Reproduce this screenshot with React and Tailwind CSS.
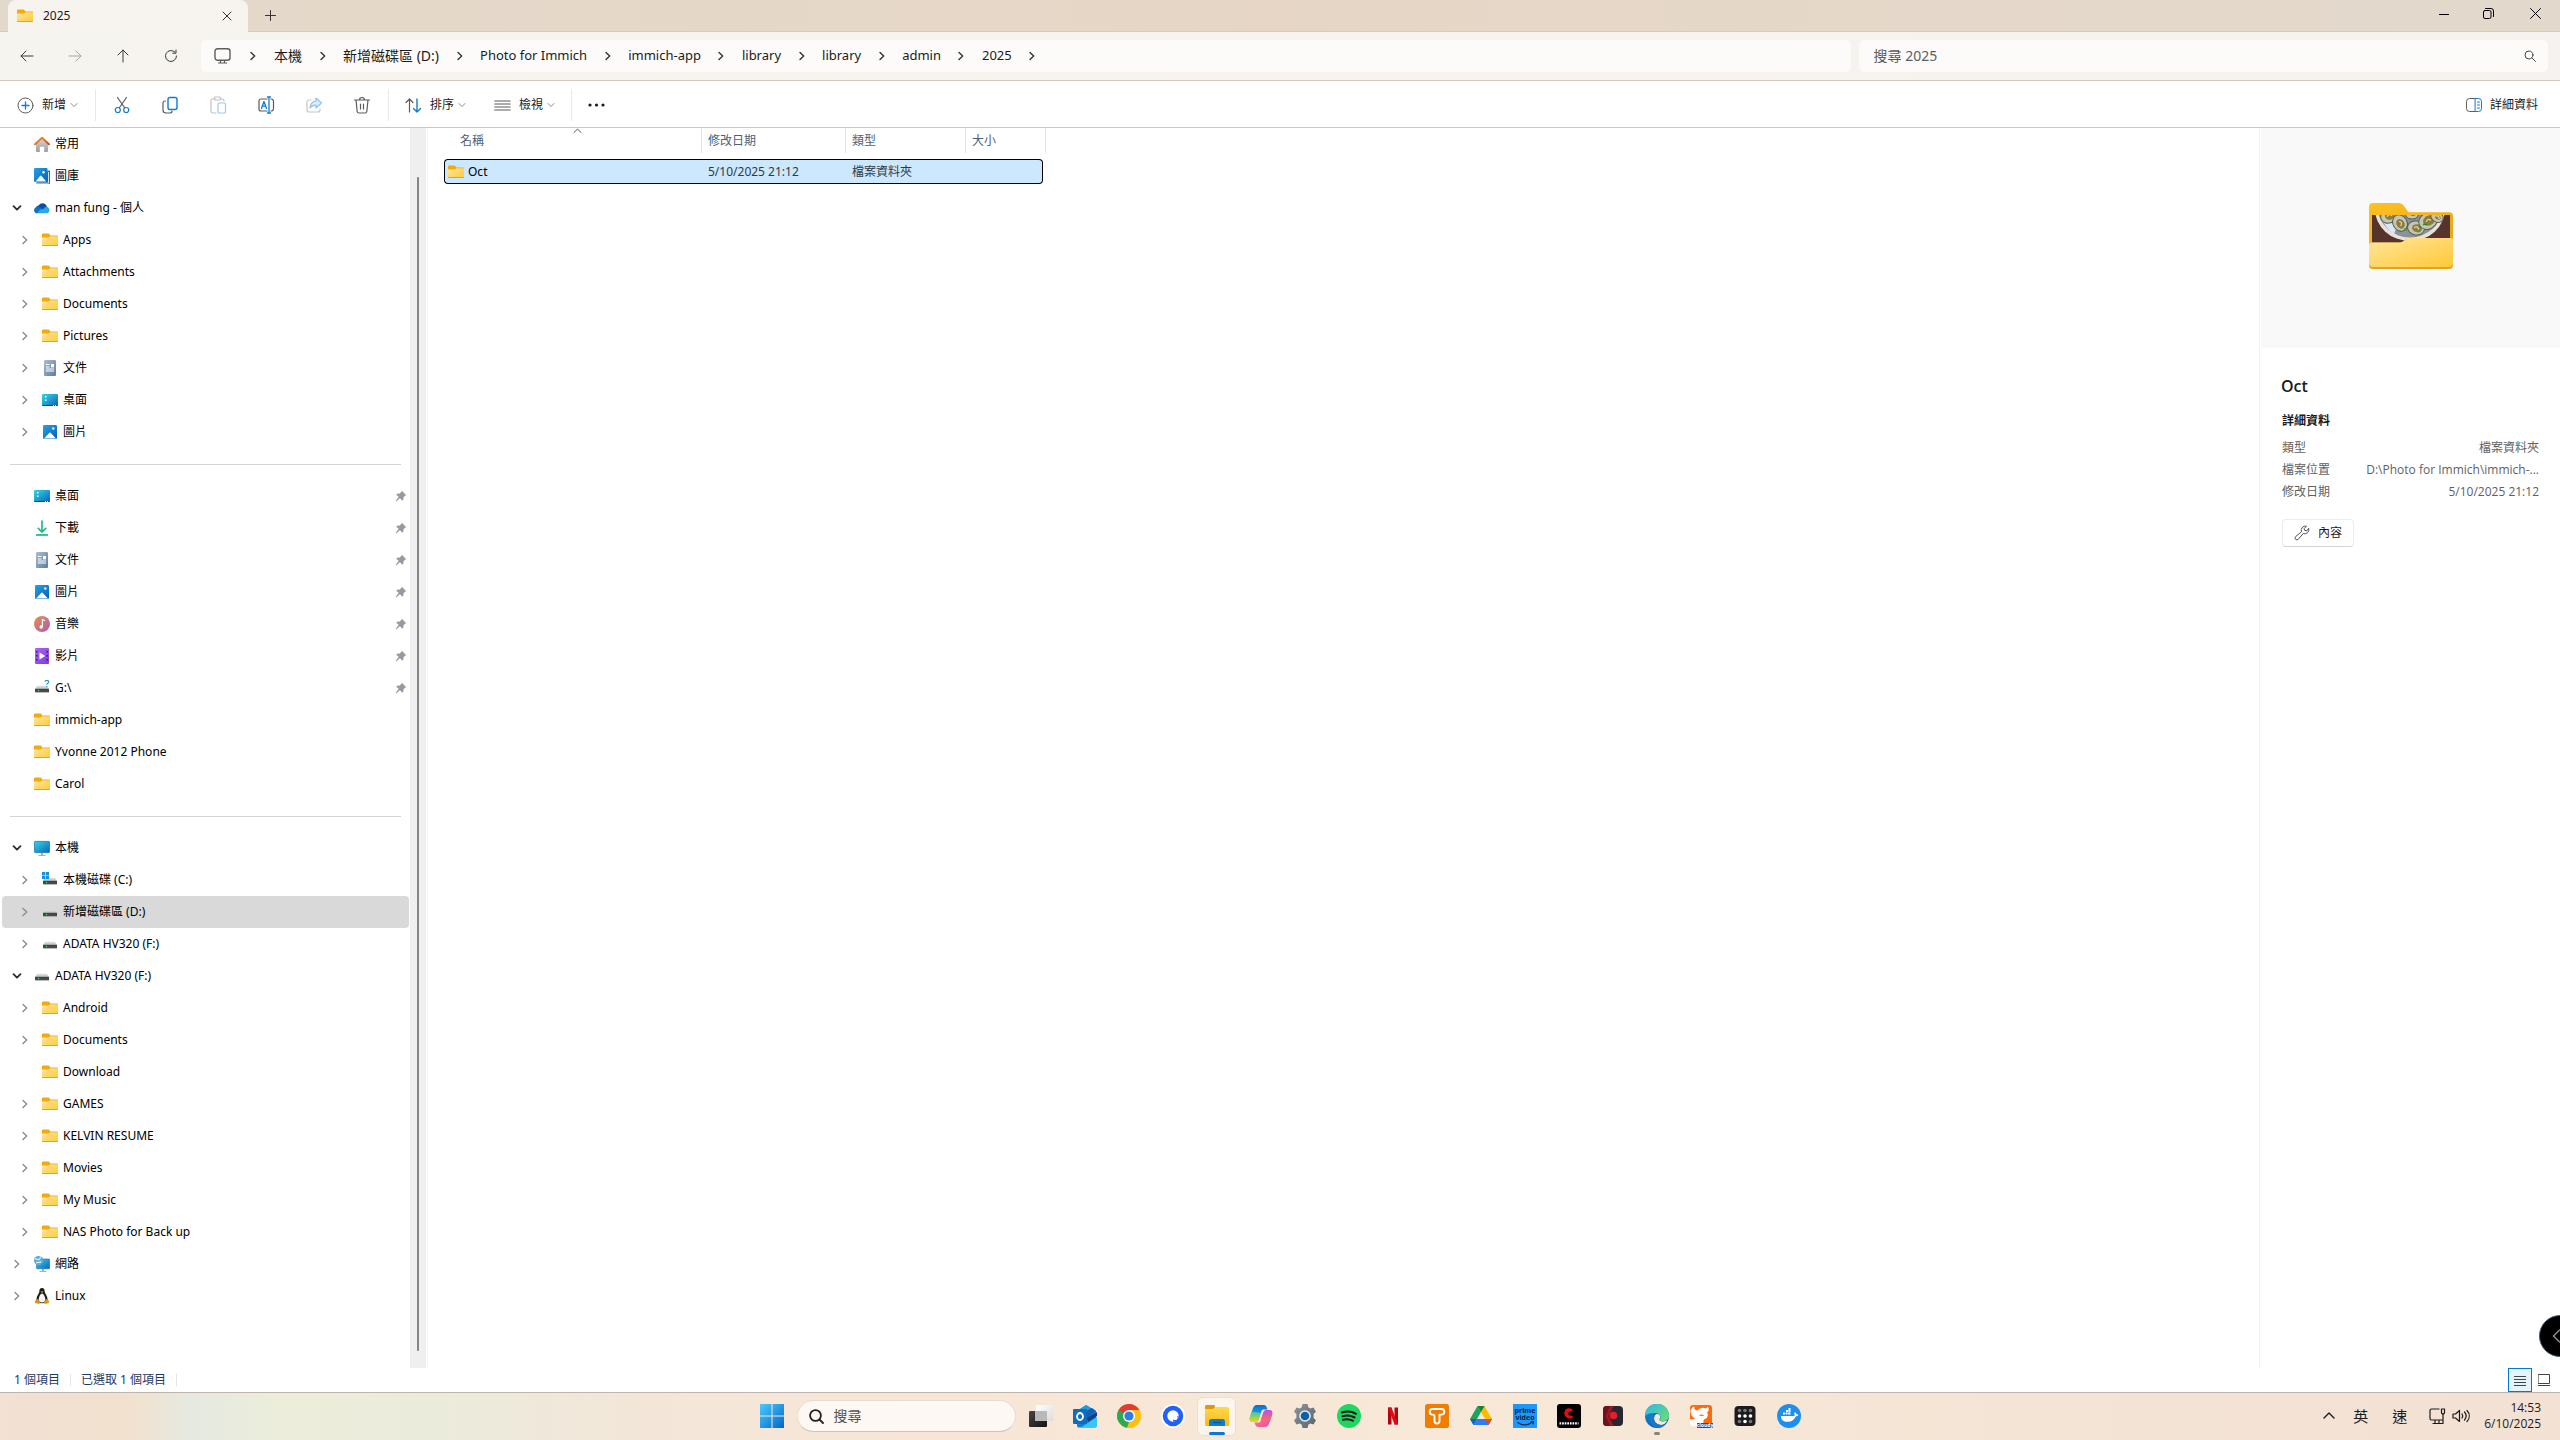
import React from "react";

/* ---------- shared gradients ---------- */

function Gradients() {
  const lin = (id, a, b, diag = true) => (
    <linearGradient id={id} x1="0" y1="0" x2={diag ? "1" : "0"} y2="1">
      <stop offset="0" stopColor={a} />
      <stop offset="1" stopColor={b} />
    </linearGradient>
  );
  return (
    <svg className="absolute size-0" aria-hidden="true">
      <defs>
        {lin("folder", "#ffe69c", "#ffc937")}
        {lin("folderBack", "#ffc21f", "#e5a11b")}
        {lin("blue", "#1fa3e8", "#0a5fb4")}
        {lin("teal", "#35d6e0", "#0b63c0")}
        {lin("doc", "#a9bed4", "#5f7d9f")}
        {lin("music", "#f08a4b", "#a860b0")}
        {lin("video", "#b065f0", "#7d3bd6")}
        {lin("green", "#3cc98a", "#0fa38f", false)}
        {lin("roof", "#f79a2e", "#d1450f")}
        {lin("wall", "#d8d8d8", "#9d9d9d", false)}
        {lin("win", "#4ccaff", "#0067c6")}
        {lin("dark", "#484644", "#141414")}
        {lin("pale", "#ffffff", "#dcdcdc")}
        {lin("disk", "#dfe2e4", "#b9bdc1", false)}
        {lin("edgeA", "#2fb7ea", "#6fe06a")}
        {lin("edgeB", "#1b8fdd", "#0a4a9a")}
        {lin("copA", "#0a6fd6", "#2bc4e8", false)}
        {lin("copB", "#35c7b0", "#f5d60a", false)}
        {lin("copC", "#b553e6", "#ff6d5a", false)}
        {lin("copD", "#ff8a5c", "#e84bb0")}
        {lin("gear", "#8b959d", "#59636b")}
        {lin("taskFolder", "#ffd84d", "#fbb717", false)}
      </defs>
    </svg>
  );
}

/* ---------- small icons ---------- */

const Svg = ({ s = 16, children, className = "" }) => (
  <svg width={s} height={s} viewBox="0 0 16 16" fill="none" className={"shrink-0 " + className} aria-hidden="true">
    {children}
  </svg>
);
const Line = ({ s = 16, color = "currentColor", w = 1, vb = 16, children, className = "" }) => (
  <svg width={s} height={s} viewBox={`0 0 ${vb} ${vb}`} fill="none" stroke={color} strokeWidth={w} strokeLinecap="round" strokeLinejoin="round" className={"shrink-0 " + className} aria-hidden="true">
    {children}
  </svg>
);

const FolderIcon = () => (
  <Svg>
    <path d="M0 2.4c0-.6.4-.9.9-.9h5.2c.5 0 .8.1 1.1.4L8.6 3.400H15c.6 0 1 .4 1 1V6H0z" fill="#f2ab0c" />
    <path d="M0 5.600h6.500c.5 0 .8-.2 1.100-.5l1-.9H15.200c.5 0 .8.300.8.800v8.200c0 .5-.3.900-.9.900H.900c-.6 0-.9-.4-.9-.9z" fill="url(#folder)" />
    <path d="M.2 13.500h15.600" stroke="#e8a31a" strokeWidth="1" />
  </Svg>
);
const HomeIcon = () => (
  <Svg>
    <path d="M2 7.500 8 2l6 5.500V15a1 1 0 0 1-1 1h-2.800v-4.500a.7.7 0 0 0-.7-.7h-3a.7.7 0 0 0-.7.700V16H3a1 1 0 0 1-1-1z" fill="url(#wall)" />
    <path d="M1 8.200 8 1.800l7 6.400" stroke="url(#roof)" strokeWidth="2" strokeLinecap="round" strokeLinejoin="round" />
  </Svg>
);
const PictureIcon = () => (
  <Svg>
    <rect x="1" y="1" width="14" height="14" rx="1.200" fill="url(#blue)" />
    <path d="M2 14.500 7.200 9a1.100 1.100 0 0 1 1.600 0L14 14.500z" fill="#fff" />
    <circle cx="11.300" cy="4.500" r="1.300" fill="#d9f0ff" />
  </Svg>
);
const GalleryIcon = () => (
  <Svg>
    <path d="M14 2.500h1.200c.4 0 .8.300.8.800V15c0 .6-.4 1-1 1H3.500c-.6 0-1-.4-1-1v-.500z" fill="#1a6fb5" />
    <path d="M3 15.200h11.500V4" stroke="#fff" strokeWidth=".8" />
    <rect x="0" y="0" width="13.500" height="14" rx="1.200" fill="url(#blue)" />
    <path d="M1.500 13.500 6 8a1 1 0 0 1 1.500 0l4.800 5.500z" fill="#e8f5ff" />
    <circle cx="9.500" cy="4.300" r="1.200" fill="#fff" />
  </Svg>
);
const CloudIcon = () => (
  <Svg>
    <path d="M2 11C.8 7 3.500 5.500 4.800 5.400 6.300 2.400 11.300 2 13 6.600L9 11z" fill="#0a4fa3" />
    <path d="M3.200 13.300A3.200 3.200 0 0 1 2.500 7c1.500-.5 2.900-.1 4 .7L12 11z" fill="#1070c8" />
    <path d="M3.500 13.300c1-3 3.500-4.500 6-4.300 1-2 3.300-2.800 4.800-1.500A3.300 3.300 0 0 1 12.800 13.300z" fill="#28a8ea" />
  </Svg>
);
const DocIcon = () => (
  <Svg>
    <rect x="2" y="0" width="12" height="16" rx="1" fill="url(#doc)" />
    <path d="M4 4.500h3.500M4 7h3.500M4 9h8M4 11h8" stroke="#fff" strokeWidth="1" />
    <rect x="9" y="4" width="3" height="3.400" fill="#fff" />
  </Svg>
);
const DesktopIcon = () => (
  <Svg>
    <rect x="0" y="2" width="16" height="12" rx="1" fill="url(#teal)" />
    <path d="M.5 13.500h15" stroke="#084a86" strokeWidth="1" />
    <path d="M3 4h1.500v1.500H3zM3 7.500h1.500V9H3z" fill="#fff" />
    <path d="M11 13.500h1M13 13.500h1" stroke="#c7f0ff" strokeWidth="1" />
  </Svg>
);
const DownloadIcon = () => (
  <Svg>
    <path d="M8 .5v11M3.800 7.800 8 12l4.200-4.200" stroke="#25b98d" strokeWidth="1.700" />
    <rect x="2" y="14" width="12" height="1.800" rx=".4" fill="url(#green)" />
  </Svg>
);
const MusicIcon = () => (
  <Svg>
    <circle cx="8" cy="8" r="8" fill="url(#music)" />
    <circle cx="7.200" cy="11" r="1.700" fill="#fff" />
    <path d="M8.400 11V3.500l2.600 1.300" stroke="#fff" strokeWidth="1.200" />
  </Svg>
);
const VideoIcon = () => (
  <Svg>
    <rect x="1" y="0" width="14" height="16" rx="1" fill="url(#video)" />
    <path d="M2.800 3v11M13.200 3v11" stroke="#3e1580" strokeWidth="1.500" strokeDasharray="1.500 2.500" />
    <path d="M5.500 4.500v7l5.800-3.500z" fill="#fff" />
  </Svg>
);
const DiskBody = () => (
  <>
    <path d="M3.200 5.800h9.600L15 9H1z" fill="url(#disk)" />
    <rect x="1" y="8.800" width="14" height="3.400" fill="#454545" />
    <path d="M1 12.300h14" stroke="#9a9a9a" strokeWidth=".6" />
    <circle cx="4.500" cy="10.500" r=".7" fill="#3fe06b" />
  </>
);
const DiskIcon = () => <Svg><DiskBody /></Svg>;
const SystemDiskIcon = () => (
  <Svg>
    <DiskBody />
    <path d="M0 0h3.200v3.200H0zM3.800 0H7v3.200H3.800zM0 3.800h3.200V7H0zM3.800 3.800H7V7H3.800z" fill="#1690e0" />
  </Svg>
);
const UnknownDiskIcon = () => (
  <Svg>
    <DiskBody />
    <path d="M11 1.800c0-2 3.600-2 3.600.1 0 1.500-1.800 1.300-1.800 2.900M12.800 6v1" stroke="#2c94d8" strokeWidth="1.200" />
  </Svg>
);
const ComputerIcon = () => (
  <Svg>
    <path d="M7 13h2v2h2.500v1h-7v-1H7z" fill="#9db3c2" />
    <rect x=".4" y="1.400" width="15.200" height="11.200" rx=".8" fill="url(#teal)" stroke="#1173b8" strokeWidth=".8" />
  </Svg>
);
const NetworkIcon = () => (
  <Svg>
    <path d="M8 13h2v2h2.500v1H5.500v-1H8z" fill="#9db3c2" />
    <rect x="2.500" y="3" width="13.200" height="9.800" rx=".8" fill="url(#teal)" stroke="#1173b8" strokeWidth=".6" />
    <circle cx="4.600" cy="4.600" r="4.600" fill="#5da9d6" />
    <path d="M1 3c2-.5 2.500 1 4 .5S5.500 1 7 1M2 7c2-1.500 3.500.5 5-1.500" stroke="#d6eefa" strokeWidth="1.300" />
  </Svg>
);
const LinuxIcon = () => (
  <Svg>
    <path d="M8 0c2 0 2.700 1.500 2.600 3.500 0 1.800 3 4.500 3 8 0 2.500-2 3.700-5.600 3.700S2.400 14 2.400 11.500c0-3.500 3-6.200 3-8C5.300 1.500 6 0 8 0z" fill="#1d1d1b" />
    <path d="M8 5.500c1.500 0 3.300 3.500 3.300 6 0 2-1.300 3-3.300 3s-3.300-1-3.300-3c0-2.500 1.800-6 3.300-6z" fill="#f4f4f0" />
    <path d="M6.500 3.800 8 3.200l1.500.6L8 5z" fill="#e5a50a" />
    <path d="M1.200 12.500 3.800 11l2.500 3.800L5 16l-4-1zM14.800 12.500 12.200 11l-2.500 3.800L11 16l4-1z" fill="#d79a12" />
  </Svg>
);
const PinIcon = () => (
  <svg width="12" height="12" viewBox="0 0 12 12" className="shrink-0" aria-label="已釘選">
    <path d="M6.800.8 11.200 5.200 10 5.800 8.600 7.300 8.300 10 7.200 10.600 4.900 8.300 1.500 11.200.8 10.500 3.700 7.100 1.400 4.800 2 3.700 4.700 3.400 6.200 2z" fill="#939ca4" />
  </svg>
);
const Chevron = ({ open, size = 10, color }) => (
  <Line s={size} vb={10} w={open ? 1.800 : 1.400} color={color || (open ? "#2b2b2b" : "#8b8b8b")}>
    {open ? <path d="M1.500 3.200 5 6.700l3.500-3.500" /> : <path d="M3 1.500 6.700 5 3 8.500" />}
  </Line>
);
const SmallDown = () => (
  <Line s={8} vb={8} color="#8a8a8a"><path d="M1 2.500 4 5.500l3-3" /></Line>
);

/* ---------- title and address bars ---------- */

function TitleBar() {
  return (
    <header className="flex h-8 shrink-0 items-stretch border-b border-[#d9c9bb] bg-linear-to-r from-[#e3d9cb] via-[#e7d6c6] to-[#e2d9cc] pl-2">
      <div className="-mb-px flex w-60 items-center rounded-t-lg bg-[#f7f4ef] pl-[9px] pr-4">
        <FolderIcon />
        <span className="ml-2.5 grow text-xs">2025</span>
        <button aria-label="關閉索引標籤">
          <Line s={10} vb={10} color="#333"><path d="M1 1l8 8M9 1 1 9" /></Line>
        </button>
      </div>
      <button aria-label="新索引標籤" className="flex w-11 items-center justify-center">
        <Line s={11} vb={11} color="#333"><path d="M5.500.5v10M.5 5.500h10" /></Line>
      </button>
      <div className="ml-auto flex pb-1">
        <button aria-label="最小化" className="flex w-11 items-center justify-center">
          <Line s={10} vb={10} color="#000"><path d="M0 5.500h10" /></Line>
        </button>
        <button aria-label="還原" className="flex w-11 items-center justify-center">
          <Line s={11} vb={11} color="#000"><rect x=".5" y="2.500" width="7.500" height="8" rx="1.500" /><path d="M2.500.5h5.500a2.500 2.500 0 0 1 2.500 2.500v5.500" /></Line>
        </button>
        <button aria-label="關閉" className="flex w-[50px] items-center justify-center">
          <Line s={11} vb={11} color="#000"><path d="M.5.5l10 10M10.500.5l-10 10" /></Line>
        </button>
      </div>
    </header>
  );
}

const crumbs = ["本機", "新增磁碟區 (D:)", "Photo for Immich", "immich-app", "library", "library", "admin", "2025"];

function NavButton({ label, faded, children }) {
  return (
    <button aria-label={label} className="flex h-8 w-12 items-center justify-center">
      <Line color={faded ? "#a9a6a2" : "#3a3a3a"}>{children}</Line>
    </button>
  );
}

function AddressBar() {
  return (
    <div className="flex h-[49px] shrink-0 items-center border-b border-[#d6c6b9] bg-linear-to-r from-[#f6f4ef] via-[#f8f3ee] to-[#f5f2ef] pl-[3px] pr-3">
      <NavButton label="上一頁"><path d="M14 8H2M7 3 2 8l5 5" /></NavButton>
      <NavButton label="下一頁" faded><path d="M2 8h12M9 3l5 5-5 5" /></NavButton>
      <NavButton label="往上"><path d="M8 14V2M3 7l5-5 5 5" /></NavButton>
      <NavButton label="重新整理"><path d="M13.500 8A5.500 5.500 0 1 1 11.800 4M13 2v3.200H9.800" /></NavButton>
      <nav aria-label="路徑" className="ml-1.5 flex h-8 grow-[42] basis-0 items-center rounded-md bg-[#fcfbf9] pl-[13px]">
        <svg width="17" height="16" viewBox="0 0 17 16" fill="none" stroke="#5d5d5d" className="shrink-0" aria-hidden="true">
          <rect x="1" y=".7" width="15" height="11.600" rx="2.500" strokeWidth="1.400" />
          <path d="M6.500 12.500v2.500M10.500 12.500v2.500M4 15h9" strokeWidth="1.200" />
        </svg>
        <ol className="flex items-center">
          <li className="flex w-[43px] justify-center"><Chevron color="#333" /></li>
          {crumbs.map((c, i) => (
            <li key={i} className="flex items-center">
              <button className={i < 2 ? "text-sm" : "text-[13px]"}>{c}</button>
              <span className="flex w-[41px] justify-center"><Chevron color="#333" /></span>
            </li>
          ))}
        </ol>
      </nav>
      <label className="ml-2 flex h-8 grow-[17] basis-0 items-center rounded-md bg-[#fcfbf9] pl-[15px] pr-3">
        <input type="search" placeholder="搜尋 2025" aria-label="搜尋 2025" className="min-w-0 grow bg-transparent text-sm outline-none placeholder:text-[#5f5d5b]" />
        <Line s={12} vb={12} color="#444"><circle cx="5" cy="5" r="4" /><path d="M8 8l3.500 3.500" /></Line>
      </label>
    </div>
  );
}

/* ---------- command bar ---------- */

const Divider = () => <span className="h-8 w-px bg-[#e9e9e9]" />;
const gray = "#5b5b5b";
const blue = "#0f7bd4";

function IconButton({ label, children }) {
  return (
    <button aria-label={label} className="flex h-10 w-12 items-center justify-center">
      <Line s={18} vb={18} w={1.200} color={gray}>{children}</Line>
    </button>
  );
}

function CommandBar() {
  return (
    <div role="toolbar" className="flex h-[47px] shrink-0 items-center border-b border-[#cfc5bb] bg-white pt-0.5 text-xs text-[#1b1b1b]">
      <button className="flex h-10 w-[95px] items-center pl-[17px]">
        <Line s={17} vb={17} color={gray}><circle cx="8.500" cy="8.500" r="7.500" /><path d="M8.500 5v7M5 8.500h7" stroke={blue} strokeWidth="1.300" /></Line>
        <span className="ml-2 mr-1">新增</span>
        <SmallDown />
      </button>
      <Divider />
      <div className="flex w-[292px] items-center pl-0.5">
        <IconButton label="剪下">
          <path d="M4.500 1.500l7 10M13.500 1.500l-7 10" />
          <circle cx="4.800" cy="14" r="2.500" stroke={blue} /><circle cx="13.200" cy="14" r="2.500" stroke={blue} />
        </IconButton>
        <IconButton label="複製">
          <path d="M4.500 5H4a2 2 0 0 0-2 2v7a3 3 0 0 0 3 3h4a2 2 0 0 0 2-2" />
          <rect x="7" y="1.500" width="9" height="12" rx="2" stroke={blue} strokeWidth="1.400" />
        </IconButton>
        <IconButton label="貼上">
          <g stroke="#c2c2c2"><path d="M6 3H3.500A1.500 1.500 0 0 0 2 4.500v11A1.500 1.500 0 0 0 3.500 17H7M12 3h1.500A1.500 1.500 0 0 1 15 4.500V5" /><rect x="5.500" y="1" width="6" height="3" rx="1" /></g>
          <rect x="9" y="7" width="7.500" height="10" rx="1.200" stroke="#9cc9ec" />
        </IconButton>
        <IconButton label="重新命名">
          <path d="M10 3H4a2 2 0 0 0-2 2v8a2 2 0 0 0 2 2h6M14 3a2.500 2.500 0 0 1 2.500 2.500v7A2.500 2.500 0 0 1 14 15" />
          <path d="M12 1v16M10.500 1h3M10.500 17h3M4.500 12.500 7 5.500l2.500 7M5.400 10.200h3.200" stroke={blue} strokeWidth="1.300" />
        </IconButton>
        <IconButton label="共用">
          <path d="M6 4H4a2 2 0 0 0-2 2v8a2 2 0 0 0 2 2h9a2 2 0 0 0 2-2v-1" stroke="#c6c6c6" />
          <path d="M11 2l5.500 5L11 12V9.200c-3 0-4.500.8-6 2.800.3-4 2.500-6.500 6-7z" stroke="#8ec3ec" fill="#dceefa" />
        </IconButton>
        <IconButton label="刪除">
          <path d="M1.500 4h15M6.500 4a2.500 2.500 0 0 1 5 0M3 4l1.200 11.500A1.700 1.700 0 0 0 5.900 17h6.200a1.700 1.700 0 0 0 1.700-1.500L15 4M7.500 8v5M10.500 8v5" />
        </IconButton>
      </div>
      <Divider />
      <button className="flex h-10 items-center pl-4">
        <Line s={17} vb={17} w={1.200} color={gray}><path d="M4.500 15V2M1 5.500 4.500 2 8 5.500" /><path d="M12 2v13M8.500 11.500 12 15l3.500-3.500" stroke={blue} strokeWidth="1.400" /></Line>
        <span className="ml-2 mr-1">排序</span>
        <SmallDown />
      </button>
      <button className="ml-7 flex h-10 items-center">
        <Line s={17} vb={17} w={1.200} color={gray}><path d="M.8 4h15.400M.8 7h15.400M.8 10h15.400M.8 13h15.400" /></Line>
        <span className="ml-2 mr-1">檢視</span>
        <SmallDown />
      </button>
      <span className="ml-4"><span className="block h-8 w-px bg-[#e9e9e9]" /></span>
      <button aria-label="查看更多" className="flex h-10 w-12 items-center justify-center">
        <svg width="17" height="4" viewBox="0 0 17 4" fill="#1b1b1b" aria-hidden="true"><circle cx="2" cy="2" r="1.600" /><circle cx="8.500" cy="2" r="1.600" /><circle cx="15" cy="2" r="1.600" /></svg>
      </button>
      <button className="ml-auto mr-[22px] flex h-10 items-center gap-2">
        <Line s={16} vb={16} color={gray}>
          <path d="M9 1.500H3.500a3 3 0 0 0-3 3v7a3 3 0 0 0 3 3H9" />
          <path d="M9.500 1.500h3a3 3 0 0 1 3 3v7a3 3 0 0 1-3 3h-3zM11.500 5h2M11.500 8h2M11.500 11h2" stroke={blue} />
        </Line>
        詳細資料
      </button>
    </div>
  );
}

/* ---------- navigation tree ---------- */

const F = FolderIcon;
const tree = [
  { t: "常用", i: HomeIcon },
  { t: "圖庫", i: GalleryIcon },
  { t: "man fung - 個人", i: CloudIcon, c: "open" },
  { t: "Apps", i: F, c: "shut", d: 1 },
  { t: "Attachments", i: F, c: "shut", d: 1 },
  { t: "Documents", i: F, c: "shut", d: 1 },
  { t: "Pictures", i: F, c: "shut", d: 1 },
  { t: "文件", i: DocIcon, c: "shut", d: 1 },
  { t: "桌面", i: DesktopIcon, c: "shut", d: 1 },
  { t: "圖片", i: PictureIcon, c: "shut", d: 1 },
  null,
  { t: "桌面", i: DesktopIcon, pin: true },
  { t: "下載", i: DownloadIcon, pin: true },
  { t: "文件", i: DocIcon, pin: true },
  { t: "圖片", i: PictureIcon, pin: true },
  { t: "音樂", i: MusicIcon, pin: true },
  { t: "影片", i: VideoIcon, pin: true },
  { t: "G:\\", i: UnknownDiskIcon, pin: true },
  { t: "immich-app", i: F },
  { t: "Yvonne 2012 Phone", i: F },
  { t: "Carol", i: F },
  null,
  { t: "本機", i: ComputerIcon, c: "open" },
  { t: "本機磁碟 (C:)", i: SystemDiskIcon, c: "shut", d: 1 },
  { t: "新增磁碟區 (D:)", i: DiskIcon, c: "shut", d: 1, active: true },
  { t: "ADATA HV320 (F:)", i: DiskIcon, c: "shut", d: 1 },
  { t: "ADATA HV320 (F:)", i: DiskIcon, c: "open" },
  { t: "Android", i: F, c: "shut", d: 1 },
  { t: "Documents", i: F, c: "shut", d: 1 },
  { t: "Download", i: F, d: 1 },
  { t: "GAMES", i: F, c: "shut", d: 1 },
  { t: "KELVIN RESUME", i: F, c: "shut", d: 1 },
  { t: "Movies", i: F, c: "shut", d: 1 },
  { t: "My Music", i: F, c: "shut", d: 1 },
  { t: "NAS Photo for Back up", i: F, c: "shut", d: 1 },
  { t: "網路", i: NetworkIcon, c: "shut" },
  { t: "Linux", i: LinuxIcon, c: "shut" },
];

function Tree() {
  return (
    <nav aria-label="瀏覽窗格" className="flex w-[428px] shrink-0 border-r border-[#f3f3f3]">
      <ul className="grow overflow-hidden pl-0.5 pr-px">
        {tree.map((n, k) => {
          if (!n) return <li key={k} className="flex h-8 items-center pl-2 pr-2"><hr className="w-full border-[#d4d4d4]" /></li>;
          const Icon = n.i;
          return (
            <li key={k}>
              <button className={"flex h-8 w-full items-center rounded-sm pr-0.5 text-left text-xs text-black " + (n.d ? "pl-4 " : "pl-2 ") + (n.active ? "bg-[#d9d9d9]" : "")}>
                <span className="flex w-6 items-center pl-0.5">{n.c && <Chevron open={n.c === "open"} />}</span>
                <Icon />
                <span className="ml-[5px] grow">{n.t}</span>
                {n.pin && <PinIcon />}
              </button>
            </li>
          );
        })}
      </ul>
      <div className="flex w-4 justify-center bg-[#efefef] pb-[17px] pt-[49px]">
        <div className="w-0.5 rounded-full bg-[#858585]" />
      </div>
      <div className="w-px" />
    </nav>
  );
}

/* ---------- file list ---------- */

function FileList() {
  const th = "h-[31px] p-0 text-left align-top font-normal";
  const cell = "flex h-[25px] items-center border-r border-[#e2e2e2] ";
  const td = "h-[25px] border-y border-black bg-[#cce8ff] p-0 pl-[6px]";
  return (
    <main className="grow pl-4">
      <table className="w-[602px] table-fixed border-separate border-spacing-0 text-xs">
        <colgroup>
          <col className="w-[258px]" /><col className="w-36" /><col className="w-[120px]" /><col className="w-[77px]" /><col className="w-[3px]" />
        </colgroup>
        <thead className="text-[#4c607a]">
          <tr>
            <th className={th}>
              <div className={cell + "relative pl-4"}>
                名稱
                <Line s={9} vb={9} color="#555" className="absolute left-[129px] top-0"><path d="M1 4.500 4.500 1 8 4.500" /></Line>
              </div>
            </th>
            <th className={th}><div className={cell + "pl-[6px]"}>修改日期</div></th>
            <th className={th}><div className={cell + "pl-[6px]"}>類型</div></th>
            <th className={th} colSpan={2}><div className={cell + "pl-[6px]"}>大小</div></th>
          </tr>
        </thead>
        <tbody>
          <tr className="text-[#2e3a45]">
            <td className="h-[25px] rounded-l-sm border border-r-0 border-black bg-[#cce8ff] p-0 pl-[3px]">
              <span className="flex items-center gap-1 text-black"><FolderIcon />Oct</span>
            </td>
            <td className={td}>5/10/2025 21:12</td>
            <td className={td}>檔案資料夾</td>
            <td className="rounded-r-sm border border-l-0 border-black bg-[#cce8ff] p-0" />
            <td className="p-0" />
          </tr>
        </tbody>
      </table>
    </main>
  );
}

/* ---------- details pane ---------- */

function PreviewFolder() {
  const shells = [[20, 13, 8, -20], [31, 20, 8, 60], [47, 25, 8, 10], [59, 18, 9, -30], [43, 11, 6, 0], [68, 14, 6, 30]];
  return (
    <svg width="84" height="66" viewBox="0 0 84 66" aria-hidden="true">
      <defs><clipPath id="photo"><rect x="3" y="12" width="78" height="30" /></clipPath></defs>
      <path d="M0 4a4 4 0 0 1 4-4h25c3 0 4.500 1 6 3l3.500 5c.7 1 1.500 1.200 2.500 1.200h39a4 4 0 0 1 4 4V46H0z" fill="url(#folderBack)" />
      <g clipPath="url(#photo)">
        <rect x="3" y="12" width="78" height="30" fill="#56332d" />
        <ellipse cx="41" cy="6" rx="35" ry="32" fill="#e8e2d8" />
        <ellipse cx="41" cy="5" rx="32" ry="29.500" fill="#8a929c" />
        <path d="M12 14c3 8 8 14 13 17l3-8z" fill="#dce6f2" />
        {shells.map(([x, y, r, a], i) => (
          <g key={i} transform={`rotate(${a} ${x} ${y})`}>
            <ellipse cx={x} cy={y} rx={r + 1} ry={r - 0.5} fill="#5a5c50" />
            <ellipse cx={x} cy={y} rx={r} ry={r - 1.5} fill="#c4c6b4" />
            <ellipse cx={x + 1} cy={y} rx={r - 3} ry={r - 4} fill="#8f7b3f" />
            <path d={`M${x - 2} ${y}q3-3 5 1`} stroke="#e0d8a8" strokeWidth="1.200" fill="none" />
          </g>
        ))}
        <path d="M54 22l3-2 2 2M35 26l3 1M49 29l3-2" stroke="#4f9a2c" strokeWidth="2" />
      </g>
      <path d="M0 42c0-1.500 1-2.500 2.500-2.500h28c2 0 3-.5 4.500-1.700l2-1.600c1-.9 2-1.200 3.500-1.200H82c1.300 0 2 1 2 2v25a4 4 0 0 1-4 4H4a4 4 0 0 1-4-4z" fill="#dfa32a" />
      <path d="M0 42c0-1.500 1-2.500 2.500-2.500h28c2 0 3-.5 4.500-1.700l2-1.600c1-.9 2-1.200 3.500-1.200H82c1.300 0 2 1 2 2v23a4 4 0 0 1-4 4H4a4 4 0 0 1-4-4z" fill="url(#folder)" />
    </svg>
  );
}

function Details() {
  const rows = [["類型", "檔案資料夾"], ["檔案位置", "D:\\Photo for Immich\\immich-..."], ["修改日期", "5/10/2025 21:12"]];
  return (
    <aside className="w-[301px] shrink-0 border-l border-[#f1f1f1] pl-px font-['Open_Sans','Noto_Sans_CJK_TC',sans-serif] text-xs">
      <div className="flex h-[220px] items-center justify-center bg-[#f9f9f9] pb-1"><PreviewFolder /></div>
      <div className="px-5 pt-[26px]">
        <h2 className="text-base font-semibold leading-6 text-[#1b1b1b]">Oct</h2>
        <h3 className="mt-[13px] pl-px font-semibold leading-5 text-[#1b1b1b]">詳細資料</h3>
        <dl className="mt-1.5 px-px text-[#5f5f5f]">
          {rows.map(([a, b]) => (
            <div key={a} className="flex h-[22px] items-center justify-between"><dt>{a}</dt><dd className="whitespace-nowrap">{b}</dd></div>
          ))}
        </dl>
        <button className="ml-px mt-4 flex h-7 w-[72px] items-center gap-2 rounded border border-[#ececec] border-b-[#d4d4d4] pl-[11px] text-[#1b1b1b]">
          <Line color="#555"><path d="M14.800 3.500a4.200 4.200 0 0 1-5.600 5L4.300 14.300a1.900 1.900 0 0 1-2.700-2.700L7.500 6.800a4.200 4.200 0 0 1 5-5.600L10.200 3.500l.4 1.900 1.900.4z" /></Line>
          內容
        </button>
      </div>
    </aside>
  );
}

function StatusBar() {
  return (
    <footer className="flex h-6 shrink-0 items-center bg-white pl-3.5 pr-1 text-xs text-[#1f3a5f]">
      <span>1 個項目</span>
      <span className="mx-2.5 h-3 w-px bg-[#e6e6e6]" />
      <span>已選取 1 個項目</span>
      <span className="mx-2.5 h-3 w-px bg-[#e6e6e6]" />
      <button aria-label="詳細資料檢視" className="ml-auto flex size-6 items-center justify-center border border-[#0078d7] bg-[#e5f3fb]">
        <Line s={12} vb={12} color="#444" className="mt-0.5"><path d="M0 1.500h12M0 4.500h12M0 7.500h12M0 10.500h12" /></Line>
      </button>
      <button aria-label="縮圖檢視" className="flex size-6 items-center justify-center">
        <Line s={12} vb={12} color="#444"><rect x=".5" y=".5" width="11" height="9" /><path d="M0 11.500h12" /></Line>
      </button>
    </footer>
  );
}

/* ---------- taskbar ---------- */

const App24 = ({ children }) => (
  <svg width="24" height="24" viewBox="0 0 24 24" fill="none" aria-hidden="true">{children}</svg>
);
const brand = "font-['Open_Sans',sans-serif]";

const apps = [
  ["工作檢視", <App24><rect x="7" y="1" width="17" height="16" rx="1" fill="url(#pale)" /><rect x="0" y="7" width="18" height="16" rx="1" fill="url(#dark)" /><rect x="6" y="7" width="12" height="10" fill="#b9b9b9" /></App24>],
  ["Outlook", <App24><path d="M4 7l9-6 10 6v15a1.500 1.500 0 0 1-1.500 1.500H6A2 2 0 0 1 4 22z" fill="#1380d4" /><path d="M4 7l9-6 5 3-12 8z" fill="#1b9de2" /><path d="M10 9l9-5 4 3-10 8z" fill="#0f5fb5" /><path d="M14 14l10-6v4l-9 6z" fill="#123f86" /><path d="M8 23.500 24 13v9a1.500 1.500 0 0 1-1.500 1.500z" fill="#35c8f5" /><rect x="0" y="5" width="14" height="15" rx="1" fill="#0f6cbd" /><ellipse cx="7" cy="12.500" rx="3" ry="3.500" stroke="#fff" strokeWidth="1.800" /></App24>],
  ["Chrome", <App24><circle cx="12" cy="12" r="12" fill="#fbc116" /><path d="M1.600 6 12 6l0 12-2 5.800A12 12 0 0 1 1.600 6z" fill="#2da94f" /><path d="M12 12 1.600 6A12 12 0 0 1 22.400 6H12z" fill="#e33b2e" /><path d="M17.200 15 12 24a12 12 0 0 0 10.400-18H12z" fill="#fbc116" /><circle cx="12" cy="12" r="6" fill="#fff" /><circle cx="12" cy="12" r="4.600" fill="#2f7de9" /></App24>],
  ["瀏覽器", <App24><circle cx="12" cy="12" r="12" fill="#fff" /><circle cx="12" cy="12" r="8" stroke="#2160fb" strokeWidth="4.500" /><circle cx="12" cy="12" r="5" fill="#fff" /><path d="M12 12v5.500h5.500V12z" fill="#2160fb" /><circle cx="14" cy="13.500" r="2.600" fill="#fff" /></App24>],
  ["檔案總管", <App24><path d="M0 2.500c0-.8.600-1.500 1.500-1.500h7c.7 0 1.500.500 1.500 1.500V6H0z" fill="#d99a0b" /><path d="M0 5h8l2-2h12.500A1.500 1.500 0 0 1 24 4.500v16a1.500 1.500 0 0 1-1.500 1.500h-21A1.500 1.500 0 0 1 0 20.500z" fill="url(#taskFolder)" /><path d="M4 22v-4.500A2.500 2.500 0 0 1 6.500 15h11a2.500 2.500 0 0 1 2.500 2.500V22z" fill="#0f7ec9" /><path d="M8 18.500h8" stroke="#0b5c9b" strokeWidth="1.500" /></App24>],
  ["Copilot", <App24><path d="M18.500 5.500 17.600 3A3 3 0 0 0 14.800 1H8C5.500 1 4.300 3 3.500 5.500L1 13c-1 3 .3 5 3 5h2.500c1.600 0 2.700-.9 3.200-2.500L12.500 7c.4-1 1.200-1.500 2.300-1.500z" fill="url(#copA)" /><path d="M2.800 7.500 1 13c-1 3 .3 5 3 5h2.500c1.600 0 2.700-.9 3.200-2.500l2.100-6.500z" fill="url(#copB)" /><path d="M5.500 18.500l.9 2.500a3 3 0 0 0 2.800 2H16c2.500 0 3.700-2 4.500-4.500L23 11c1-3-.3-5-3-5h-2.500c-1.600 0-2.700.9-3.200 2.500L11.500 17c-.4 1-1.200 1.500-2.300 1.500z" fill="url(#copD)" /><path d="M21.200 16.500 23 11c1-3-.3-5-3-5h-2.500c-1.600 0-2.700.9-3.200 2.500L12.200 15z" fill="url(#copC)" /></App24>],
  ["設定", <App24><path d="M9.500 0h5l.8 3.300 2 1.100 3.200-1L23 7.700l-2.400 2.300v4L23 16.300l-2.500 4.300-3.200-1-2 1.100-.8 3.300h-5l-.8-3.300-2-1.100-3.200 1L1 16.300 3.400 14v-4L1 7.700l2.500-4.300 3.200 1 2-1.100z" fill="url(#gear)" /><circle cx="12" cy="12" r="5.800" fill="#e9eef2" /><circle cx="12" cy="12" r="4.300" fill="#0f5ea8" /></App24>],
  ["Spotify", <App24><circle cx="12" cy="12" r="12" fill="#1ed760" /><path d="M5 8.500c5-1.500 10-1 14 1.300M5.500 12.200c4.500-1.200 8.500-.7 12 1.200M6 15.700c3.700-1 7-.5 9.800 1" stroke="#111" strokeWidth="2" strokeLinecap="round" /></App24>],
  ["Netflix", <App24><path d="M7 3.500h3.500v17H7zM13.500 3.500H17v17h-3.500z" fill="#b1060f" /><path d="M7 3.500h3.500l6.500 17h-3.500z" fill="#e50914" /></App24>],
  ["T", <App24><rect width="24" height="24" rx="2.500" fill="#f07c00" /><path d="M7.500 5h9a2.800 2.800 0 0 1 0 5.600H14.500V17a2.500 2.500 0 0 1-5 0v-5c0-1-1-1.400-2-1.400a2.800 2.800 0 0 1 0-5.600z" stroke="#fff" strokeWidth="1.900" strokeLinejoin="round" /></App24>],
  ["Google Drive", <App24><path d="M8.500 2h7l7.500 13h-7z" fill="#fbbc04" /><path d="M8.500 2 1 15l3.500 6L12 8z" fill="#1ea45b" /><path d="M8.500 2h7L12 8z" fill="#12833f" /><path d="M4.500 21h15L23 15H8z" fill="#2f7cf0" /><path d="M1 15h7l-3.500 6z" fill="#1b5fd0" /><path d="M16 15h7l-3.500 6z" fill="#e94335" /></App24>],
  ["Prime Video", <App24><rect width="24" height="24" fill="#1a98ff" /><text x="12" y="8.500" fontSize="7" fontWeight="700" textAnchor="middle" fill="#0b2340" className={brand}>prime</text><text x="12" y="15.500" fontSize="7" fontWeight="700" textAnchor="middle" fill="#0b2340" className={brand}>video</text><path d="M4.500 18.500c4.500 3 10 3 14 .3M17.500 17.800h3l-.6 2.600" stroke="#0b2340" strokeWidth="1.200" /></App24>],
  ["影視", <App24><rect width="24" height="24" rx="3" fill="#000" /><path d="M15.500 5.500C11.500 2.500 7 5 7.300 9.500c.2 3.500 3.500 5.500 6.700 5 2-.3 2.500-2.300 1-2.800-1.800-.5-3 .2-3.800-1.500-.6-1.800.8-3.200 4.300-3z" fill="#e50914" /><path d="M2.500 19.300h19" stroke="#fff" strokeWidth="2.200" strokeDasharray="1.700 .9" /></App24>],
  ["錄影", <App24><rect x="2" y="2" width="20" height="20" rx="4" fill="#272733" /><path d="M6 2h7L7.500 12 13 22H6a4 4 0 0 1-4-4V6a4 4 0 0 1 4-4z" fill="#a01522" /><path d="M6 2h3L4.500 12 9 22H6a4 4 0 0 1-4-4V6a4 4 0 0 1 4-4z" fill="#6d1220" /><circle cx="12.500" cy="11.500" r="3.800" fill="#e81c2e" /></App24>],
  ["Edge", <App24><circle cx="12" cy="12" r="12" fill="url(#edgeB)" /><path d="M0 12A12 12 0 0 1 24 11c.3 4-2.500 6-6 6-2 0-3.500-.8-3-2 1.500-2.500-.5-6-5-6C5 9 1 10 0 12z" fill="url(#edgeA)" /><path d="M9 14c0-3 2-4 3.500-4 2.500.5 3.500 3 2 5-.6 1.500 1 2.400 3.300 2.400 2 0 3.500-.5 4.700-1.200C20.500 20 18 21 15.500 21 12 21 9 18 9 14z" fill="#f5e9dc" /><path d="M4 11.500c-1 6 3 11.500 9 12.400 3.500-.2 6-1.800 7.500-3.600-5.500 2-11-.8-11.500-5.300 0-2 .5-3.200 1.500-4.200-2.500-1-5-.8-6.500.7z" fill="#1479cf" /></App24>],
  ["雲端遊戲", <App24><rect x="1" y="1" width="22" height="21" rx="3" fill="#ff6a0a" /><path d="M1.500 6.500C3 3 5 2.500 5.500 3c-.5 2 .5 3.500 3 3.500C11 4 14 3 16.500 4.500c1.500-.2 2-1 2-2 2 2 1.500 4.500-.5 6 1.500 2 1 4.500-1 6-2 .5-3 2-2.500 4L12 22H3a2 2 0 0 1-2-2v-5c2 1 4 .5 5-1-3-.5-4.500-4-4.500-7.500z" fill="#fff" /><path d="M10.500 11.500c1.500-.6 3-.6 4 .2" stroke="#ff6a0a" strokeWidth="1.300" /><rect x="8" y="19" width="16" height="5" fill="#0a50c8" /><text x="16" y="23.300" fontSize="5" fontWeight="700" textAnchor="middle" fill="#fff" className={brand}>cloudy</text></App24>],
  ["應用程式", <App24><rect x="1.500" y="2" width="21" height="20" rx="4" fill="#1b1b1d" />{[6.500, 12, 17.500].map((y, r) => [6.500, 12, 17.500].map((x, c) => <circle key={x + "-" + y} cx={x} cy={y} r="1.800" fill={r === 1 || (r === 2 && c === 1) ? "#fff" : "#77777a"} />))}</App24>],
  ["Docker", <App24><circle cx="12" cy="12" r="12" fill="#1d8fee" /><path d="M4 12h13.500c.3-1.500 0-2.500-.5-3 1-1 2-.2 2.500 1.200 1 0 1.800.2 2 .5-.5 1.200-1.500 1.600-2.700 1.600-1.300 3.500-4 5.500-8 5.500-4.500 0-7-2.200-6.800-5.800z" fill="#fff" /><path d="M6 9.500h8M9 7h5M11.500 5h2" stroke="#fff" strokeWidth="1.900" strokeDasharray="2 .5" /></App24>],
];

function Taskbar() {
  return (
    <footer className="grid h-12 shrink-0 grid-cols-[1fr_auto_1fr] items-center border-t border-[#bdb5ae] bg-[linear-gradient(90deg,#f2e1d4_0%,#f2e1ce_5%,#e5e9e1_7.5%,#ecedda_11%,#ebebdc_17%,#f3e6d9_25%,#f7e6d6_35%,#f8e8d7_60%,#f3e3d5_85%,#f3e2d4_100%)] pb-px">
      <span />
      <div className="flex h-full items-center">
        <button aria-label="開始" className="flex w-11 items-center justify-center">
          <svg width="24" height="24" viewBox="0 0 23 23" aria-hidden="true"><path d="M0 0h11v11H0zM12 0h11v11H12zM0 12h11v11H0zM12 12h11v11H12z" fill="url(#win)" /></svg>
        </button>
        <label className="mx-[3px] flex h-8 w-[219px] items-center rounded-full border border-[#e8dccf] border-b-[#cfc4b8] bg-[#fdf8f3] pl-[11px]">
          <Line s={15} vb={15} w={1.800} color="#222"><circle cx="6.500" cy="6.500" r="5.400" /><path d="M10.500 10.500 14 14" /></Line>
          <input placeholder="搜尋" aria-label="搜尋" className="ml-2.5 min-w-0 grow bg-transparent text-sm outline-none placeholder:text-[#5a5550]" />
        </label>
        {apps.map(([name, icon], i) => (
          <button key={name} aria-label={name} className="relative flex h-full w-11 items-center justify-center">
            {i === 4 ? <span className="flex h-[39px] w-[39px] items-center justify-center rounded-md border border-[#eadfd5] bg-[#fcf5ee]">{icon}</span> : icon}
            {i === 4 && <span className="absolute bottom-1 left-3.5 h-[3px] w-4 rounded-full bg-[#0a7ad6]" />}
            {i === 14 && <span className="absolute bottom-1 left-[19px] h-[3px] w-1.5 rounded-full bg-[#8a8378]" />}
          </button>
        ))}
      </div>
      <div className="flex items-center justify-end pr-[19px] text-[#1b1b1b]">
        <button aria-label="顯示隱藏的圖示"><Line s={12} vb={12} w={1.400}><path d="M1 8l5-5 5 5" /></Line></button>
        <button className="ml-[18px] text-[15px]">英</button>
        <button className="ml-6 text-[15px]">速</button>
        <button aria-label="網路" className="ml-[22px]">
          <Line s={17} vb={17} w={1.200}><path d="M10 1H2.500A1.500 1.500 0 0 0 1 2.500v8A1.500 1.500 0 0 0 2.500 12H13M4 15.500h9M6 12v3.500M10 12v3.500M12.500 1h3v4l-1.500 1.500L12.500 5zM14 6.500V15.500" /></Line>
        </button>
        <button aria-label="音量" className="ml-1.5">
          <Line s={18} vb={18} w={1.200}><path d="M1 7h2.500L7.500 3.500v11L3.500 11H1zM10 7c.8 1.200.8 2.800 0 4M12.500 5c2 2.400 2 5.600 0 8M15 3.500c3 3.300 3 7.700 0 11" /></Line>
        </button>
        <time className="ml-3.5 text-right font-['Open_Sans',sans-serif] text-xs leading-4">14:53<br />6/10/2025</time>
      </div>
    </footer>
  );
}

export default function App() {
  return (
    <div className="relative flex h-screen flex-col overflow-hidden bg-white font-['Noto_Sans','Noto_Sans_CJK_TC',sans-serif] text-[#1b1b1b]">
      <Gradients />
      <TitleBar />
      <AddressBar />
      <CommandBar />
      <div className="flex min-h-0 grow">
        <Tree />
        <FileList />
        <Details />
      </div>
      <StatusBar />
      <Taskbar />
      <button aria-label="展開側邊面板" className="absolute -right-[21px] bottom-[83px] flex size-[42px] items-center rounded-full border border-[#3f5d75] bg-black pl-3">
        <Line s={14} vb={14} w={1.500} color="#8d8d8d"><path d="M7.500 1 1.500 7l6 6" /></Line>
      </button>
    </div>
  );
}
